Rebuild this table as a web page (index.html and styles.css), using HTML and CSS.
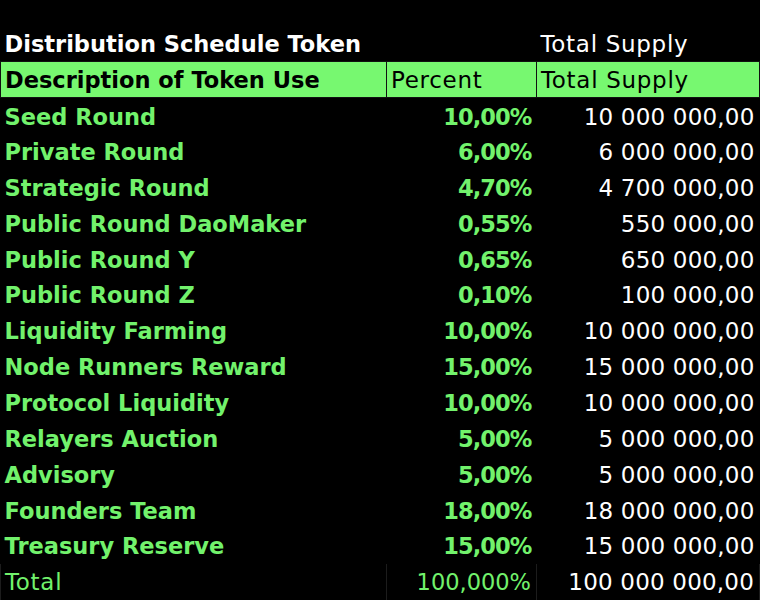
FILE: index.html
```html
<!DOCTYPE html>
<html>
<head>
<meta charset="utf-8">
<link rel="stylesheet" href="styles.css">
</head>
<body>
<table class="dist">
  <colgroup>
    <col class="c-desc">
    <col class="c-pct">
    <col class="c-sup">
  </colgroup>
  <tr class="title-row">
    <td class="title">Distribution Schedule Token</td>
    <td></td>
    <td class="sup-title">Total Supply</td>
  </tr>
  <tr class="head-row">
    <th class="h-desc">Description of Token Use</th>
    <th class="h-pct">Percent</th>
    <th class="h-sup">Total Supply</th>
  </tr>
  <tr><td class="name">Seed Round</td><td class="pct">10,00%</td><td class="sup">10 000 000,00</td></tr>
  <tr><td class="name">Private Round</td><td class="pct">6,00%</td><td class="sup">6 000 000,00</td></tr>
  <tr><td class="name">Strategic Round</td><td class="pct">4,70%</td><td class="sup">4 700 000,00</td></tr>
  <tr><td class="name">Public Round DaoMaker</td><td class="pct">0,55%</td><td class="sup">550 000,00</td></tr>
  <tr><td class="name">Public Round Y</td><td class="pct">0,65%</td><td class="sup">650 000,00</td></tr>
  <tr><td class="name">Public Round Z</td><td class="pct">0,10%</td><td class="sup">100 000,00</td></tr>
  <tr><td class="name">Liquidity Farming</td><td class="pct">10,00%</td><td class="sup">10 000 000,00</td></tr>
  <tr><td class="name">Node Runners Reward</td><td class="pct">15,00%</td><td class="sup">15 000 000,00</td></tr>
  <tr><td class="name">Protocol Liquidity</td><td class="pct">10,00%</td><td class="sup">10 000 000,00</td></tr>
  <tr><td class="name">Relayers Auction</td><td class="pct">5,00%</td><td class="sup">5 000 000,00</td></tr>
  <tr><td class="name">Advisory</td><td class="pct">5,00%</td><td class="sup">5 000 000,00</td></tr>
  <tr><td class="name">Founders Team</td><td class="pct">18,00%</td><td class="sup">18 000 000,00</td></tr>
  <tr><td class="name">Treasury Reserve</td><td class="pct">15,00%</td><td class="sup">15 000 000,00</td></tr>
  <tr class="total-row"><td class="t-name">Total</td><td class="t-pct">100,000%</td><td class="t-sup">100 000 000,00</td></tr>
</table>
</body>
</html>
```
FILE: styles.css
```css
html, body {
  margin: 0;
  padding: 0;
  background: #000;
}
body {
  padding-top: 26px;
  font-family: "DejaVu Sans", "Liberation Sans", sans-serif;
  font-size: 23px;
  letter-spacing: 0.7px;
  color: #fff;
}
.dist {
  border-collapse: collapse;
  table-layout: fixed;
  width: 759px;
}
.c-desc { width: 386px; }
.c-pct { width: 150px; }
.c-sup { width: 223px; }
.dist td, .dist th {
  height: 35.85px;
  padding: 1px 5px 0 4px;
  box-sizing: border-box;
  white-space: nowrap;
  overflow: hidden;
  line-height: 34px;
}
.title,
.h-desc,
.name,
.pct {
  font-weight: bold;
  font-size: 22.5px;
  letter-spacing: 0;
}
.title { color: #fff; }
.sup-title { color: #fff; }
.head-row th {
  background: #77f870;
  color: #000;
  text-align: left;
  border: 1px solid #111;
}
.h-pct, .h-sup {
  font-weight: normal;
  padding-left: 6px;
}
.name { color: #72f26c; }
.pct {
  color: #72f26c;
  text-align: right;
  letter-spacing: -0.9px;
  padding-right: 6px;
}
.sup {
  color: #fff;
  text-align: right;
  letter-spacing: 0.2px;
}
.total-row td {
  border-left: 1px solid #1c1c1c;
  border-right: 1px solid #1c1c1c;
}
.t-name { color: #72f26c; }
.t-pct {
  color: #72f26c;
  text-align: right;
  padding-right: 6px;
  font-size: 22.5px;
  letter-spacing: 0;
}
.t-sup {
  color: #fff;
  text-align: right;
  letter-spacing: 0.2px;
}
```
